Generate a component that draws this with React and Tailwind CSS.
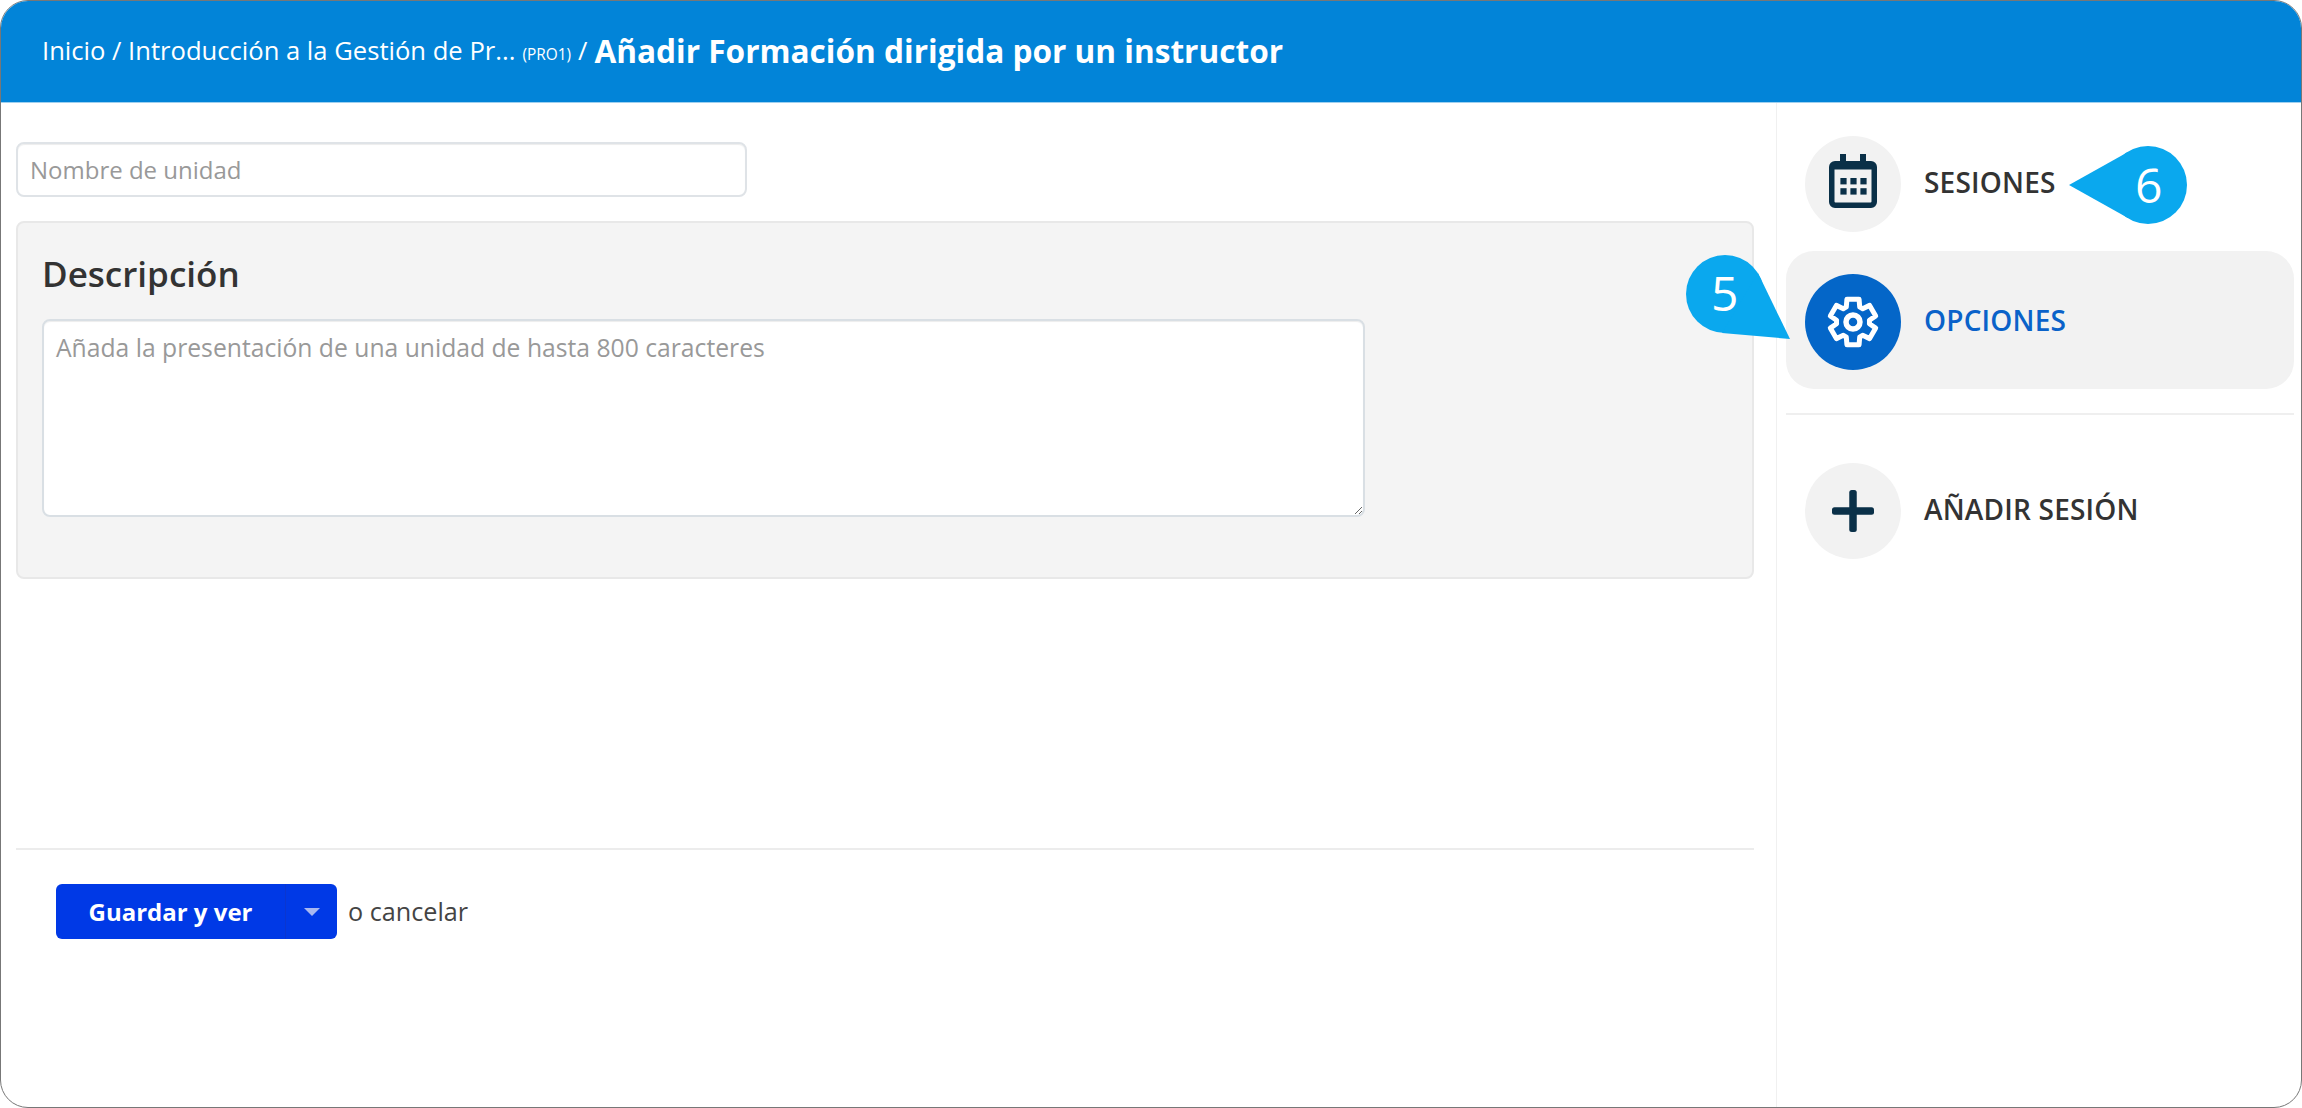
// six-tooth gear outline, centred on 0,0
const gearPath = [0, 60, 120, 180, 240, 300]
  .map((deg, i) => {
    const pt = (r, a) => {
      const rad = ((deg + a - 90) * Math.PI) / 180;
      return `${(r * Math.cos(rad)).toFixed(2)} ${(r * Math.sin(rad)).toFixed(2)}`;
    };
    const start = `${i === 0 ? 'M' : 'A16.5 16.5 0 0 1'} ${pt(16.5, -24)}`;
    return `${start} L${pt(23.5, -15)} L${pt(23.5, 15)} L${pt(16.5, 24)}`;
  })
  .join(' ') + ' A16.5 16.5 0 0 1 ' + `${(16.5 * Math.cos((-114 * Math.PI) / 180)).toFixed(2)} ${(16.5 * Math.sin((-114 * Math.PI) / 180)).toFixed(2)}` + ' Z';

function CalendarIcon() {
  return (
    <svg width="48" height="54" viewBox="0 0 48 54" fill="currentColor" className="mb-[6px]">
      <path
        fillRule="evenodd"
        d="M11 0h6v7h14V0h6v7h5a6 6 0 0 1 6 6v35a6 6 0 0 1-6 6H6a6 6 0 0 1-6-6V13a6 6 0 0 1 6-6h5z M5.5 15.5v32a1 1 0 0 0 1 1h35a1 1 0 0 0 1-1v-32z"
      />
      <rect x="11.4" y="24" width="6.2" height="6.4" />
      <rect x="21.4" y="24" width="6.2" height="6.4" />
      <rect x="31.4" y="24" width="6.2" height="6.4" />
      <rect x="11.4" y="34.2" width="6.2" height="6.4" />
      <rect x="21.4" y="34.2" width="6.2" height="6.4" />
      <rect x="31.4" y="34.2" width="6.2" height="6.4" />
    </svg>
  );
}

function GearIcon() {
  return (
    <svg width="56" height="56" viewBox="-28 -28 56 56" fill="none" stroke="currentColor" strokeWidth="5" strokeLinejoin="round">
      <path d={gearPath} />
      <circle r="7" strokeWidth="5.5" />
    </svg>
  );
}

function PlusIcon() {
  return (
    <svg width="42" height="42" viewBox="0 0 42 42" fill="currentColor">
      <rect x="17.25" y="0" width="7.5" height="42" rx="2.5" />
      <rect x="0" y="17.25" width="42" height="7.5" rx="2.5" />
    </svg>
  );
}

function SideItem({ icon, label, active }) {
  return (
    <div className={`flex h-[138px] items-center gap-[23px] rounded-[28px] pl-[19px] ${active ? 'bg-[#f2f2f2]' : ''}`}>
      <div className={`mt-[3px] flex h-[96px] w-[96px] items-center justify-center rounded-full ${active ? 'bg-[#0466c8] text-white' : 'bg-[#f2f2f2] text-[#0a3048]'}`}>
        {icon}
      </div>
      <span className={`text-[28px] font-semibold tracking-[0.2px] ${active ? 'text-[#0a62c9]' : 'text-[#333333]'}`}>{label}</span>
    </div>
  );
}

export default function App() {
  return (
    <div className="relative flex h-[1108px] w-full flex-col overflow-hidden rounded-[28px] border border-[#777777] bg-white font-['Open_Sans',sans-serif] text-[#333333]">
      {/* Breadcrumb */}
      <header className="flex h-[102px] shrink-0 items-center border-b border-[#9fd0ef] bg-[#0284d8] pl-[41px] text-[25.6px] text-white">
        <span>Inicio / Introducción a la Gestión de Pr...</span>
        <span className="mx-[7px] mt-[6px] text-[15.4px]">(PRO1)</span>
        <span>/</span>
        <span className="mb-[2px] ml-[7px] text-[31.6px] font-bold">Añadir Formación dirigida por un instructor</span>
      </header>

      <div className="flex min-h-0 flex-1">
        <main className="flex w-[1775px] shrink-0 flex-col pl-[15px] pr-[22px]">
          <input
            placeholder="Nombre de unidad"
            className="mt-[39px] h-[55px] w-[731px] rounded-[8px] border-2 border-[#dfe3e7] bg-white px-[12px] text-[24px] shadow-[inset_0_1px_1px_rgba(0,0,0,0.075)] placeholder:text-[#999999]"
          />

          {/* Description panel */}
          <section className="mt-[24px] h-[358px] rounded-[8px] border-2 border-[#e8e8e8] bg-[#f4f4f4] pl-[24px] pt-[28px]">
            <h2 className="text-[35px] font-semibold leading-[46px] text-[#333333]">Descripción</h2>
            <textarea
              placeholder="Añada la presentación de una unidad de hasta 800 caracteres"
              className="mt-[22px] block h-[198px] w-[1323px] rounded-[8px] border-2 border-[#d9dfe4] bg-white px-[12px] py-[8px] text-[24.7px] shadow-[inset_0_1px_1px_rgba(0,0,0,0.075)] placeholder:text-[#999999]"
            />
          </section>

          <div className="mt-[269px] border-t-2 border-[#ececec]" />

          <div className="mt-[34px] flex items-center pl-[40px]">
            <div className="flex h-[55px] w-[281px] rounded-[6px] bg-[#0039e6] text-white">
              <div className="flex w-[230px] items-center justify-center border-r border-[#0a36d0] text-[24px] font-bold">Guardar y ver</div>
              <div className="flex flex-1 items-center justify-center">
                <div className="h-0 w-0 border-x-[8px] border-t-[8px] border-x-transparent border-t-[#a8b8f0]" />
              </div>
            </div>
            <span className="ml-[11px] text-[25.2px] text-[#444444]">o cancelar</span>
          </div>
        </main>

        {/* Sidebar */}
        <aside className="flex-1 border-l border-[#f0f0f0] pl-[9px] pr-[7px] pt-[10px]">
          <div className="h-[138px]">
            <SideItem label="SESIONES" icon={<CalendarIcon />} />
          </div>
          <SideItem active label="OPCIONES" icon={<GearIcon />} />
          <div className="mt-[24px] border-t-2 border-[#efefef]" />
          <div className="mt-[25px]">
            <SideItem label="AÑADIR SESIÓN" icon={<PlusIcon />} />
          </div>
        </aside>
      </div>

      {/* Callouts */}
      <svg className="absolute left-0 top-0" width="2302" height="1108" viewBox="0 0 2302 1108" fill="#0aa8ee">
        <circle cx="2147" cy="184" r="39" />
        <path d="M2068 184 L2127 151 L2127 217 Z" />
        <circle cx="1724" cy="293" r="39" />
        <path d="M1789 338 L1757 272 L1721 332 Z" />
      </svg>
      <span className="absolute left-[2134px] top-[151px] text-[48px] leading-[65px] text-white">6</span>
      <span className="absolute left-[1710px] top-[259px] text-[48px] leading-[65px] text-white">5</span>
    </div>
  );
}
